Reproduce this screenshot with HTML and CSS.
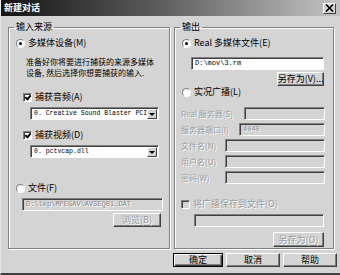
FILE: index.html
```html
<!DOCTYPE html>
<html lang="zh-CN">
<head>
  <meta charset="UTF-8">
  <title>新建对话</title>
  <link rel="stylesheet" href="styles.css">
</head>
<body>
<div class="dialog">
  <div class="titlebar">
    <span class="title">新建对话</span>
    <span class="close">
      <svg width="9" height="8" viewBox="0 0 9 8"><path d="M1 0.5 L8 7.5 M8 0.5 L1 7.5" stroke="#000" stroke-width="1.6"/></svg>
    </span>
  </div>

  <div class="main">
    <!-- 输入 -->
    <fieldset class="group group-in">
      <legend>输入来源</legend>
      <div class="opt opt-top"><span class="radio on"></span>多媒体设备(M)</div>
      <p class="hint">准备好你将要进行捕获的来源多媒体<br>设备, 然后选择你想要捕获的输入.</p>
      <div class="opt opt-audio"><span class="check on"></span>捕获音频(A)</div>
      <div class="combo"><span class="combo-text">0. Creative Sound Blaster PCI</span><span class="combo-btn"></span></div>
      <div class="opt opt-video"><span class="check on"></span>捕获视频(D)</div>
      <div class="combo"><span class="combo-text">0. pctvcap.dll</span><span class="combo-btn"></span></div>
      <div class="opt opt-file"><span class="radio"></span>文件(F)</div>
      <div class="field field-file off">D:\lkp\MPEGAV\AVSEQ01.DAT</div>
      <div class="btn btn-browse off">浏览(B)</div>
    </fieldset>

    <!-- 输出 -->
    <fieldset class="group group-out">
      <legend>输出</legend>
      <div class="opt opt-top"><span class="radio on"></span>Real 多媒体文件(E)</div>
      <div class="field field-rm">D:\mov\3.rm</div>
      <div class="btn btn-saveas">另存为(V)...</div>
      <div class="opt opt-live"><span class="radio"></span>实况广播(L)</div>
      <div class="rows">
        <div class="row"><span class="lbl">Real 服务器(S)</span><span class="field off w80"></span></div>
        <div class="row"><span class="lbl">服务器端口(I)</span><span class="field off w85">4040</span></div>
        <div class="row"><span class="lbl">文件名(N)</span><span class="field off w99"></span></div>
        <div class="row"><span class="lbl">用户名(U)</span><span class="field off w99"></span></div>
        <div class="row"><span class="lbl">密码(W)</span><span class="field off w99"></span></div>
      </div>
      <div class="opt opt-save off"><span class="check dis"></span>将广播保存到文件(O)</div>
      <div class="field field-save off"></div>
      <div class="btn btn-save off">另存为(O)</div>
    </fieldset>
  </div>

  <div class="footer">
    <div class="btn btn-foot btn-default">确定</div>
    <div class="btn btn-foot btn-wide">取消</div>
    <div class="btn btn-foot btn-wide">帮助</div>
  </div>
</div>
</body>
</html>
```

FILE: styles.css
```css
* {
  margin: 0;
  padding: 0;
  box-sizing: border-box;
}

body {
  font-family: "Noto Sans CJK SC", "Noto Sans", sans-serif;
  font-size: 9px;
  color: #000;
  background: #d4d4d4;
}

.dialog {
  width: 340px;
  height: 275px;
  background: #d4d4d4;
  border-left: 1px solid #e8e8e8;
  border-bottom: 2px solid #404040;
  display: flex;
  flex-direction: column;
  overflow: hidden;
}

/* title bar */
.titlebar {
  height: 16px;
  flex: none;
  display: flex;
  align-items: center;
  justify-content: space-between;
  padding: 0 4px 0 3px;
  background: linear-gradient(to right, #141414, #5a5a5a 45%, #c4c4c4);
}

.title {
  color: #fff;
  font-weight: bold;
  font-size: 9px;
  line-height: 10px;
}

.close {
  width: 13px;
  height: 11px;
  display: flex;
  align-items: center;
  justify-content: center;
  background: #d4d4d4;
  border: 1px solid;
  border-color: #fff #404040 #404040 #fff;
}

/* groups */
.main {
  height: 233px;
  flex: none;
  display: flex;
  gap: 4px;
  padding: 6px 0 0 7px;
}

.group {
  border: 1px solid #808080;
  box-shadow: 1px 1px 0 #fff, inset 1px 1px 0 #fff;
  min-width: 0;
  display: flex;
  flex-direction: column;
  align-items: flex-start;
}

.group-in {
  width: 162px;
}

.group-out {
  width: 160px;
}

legend {
  margin-left: 5px;
  padding: 0 2px;
  line-height: 10px;
}

.opt {
  display: flex;
  align-items: center;
  gap: 3px;
  height: 10px;
  line-height: 10px;
  white-space: nowrap;
}

.opt-top {
  margin: 6px 0 0 7px;
}

.hint {
  margin: 8px 0 0 17px;
  font-size: 8px;
  line-height: 11px;
  white-space: nowrap;
}

.opt-audio {
  margin: 14px 0 0 14px;
}

.opt-video {
  margin: 10px 0 0 14px;
}

.opt-file {
  margin: 25px 0 0 7px;
}

.opt-live {
  margin: 1px 0 0 7px;
}

.opt-save {
  margin: 15px 0 0 6px;
}

/* radio / check */
.radio {
  width: 9px;
  height: 9px;
  border-radius: 50%;
  border: 1px solid;
  border-color: #808080 #fff #fff #808080;
  background: #fff;
  display: flex;
  align-items: center;
  justify-content: center;
}

.radio.on::after {
  content: "";
  width: 3px;
  height: 3px;
  border-radius: 50%;
  background: #000;
}

.check {
  width: 9px;
  height: 9px;
  border: 1px solid;
  border-color: #808080 #fff #fff #808080;
  box-shadow: inset 1px 1px 0 #404040;
  background: #fff;
  position: relative;
}

.check.on::after {
  content: "";
  position: absolute;
  left: 2px;
  top: 0;
  width: 2px;
  height: 4px;
  border: solid #000;
  border-width: 0 2px 2px 0;
  transform: rotate(40deg);
}

.check.dis {
  background: #d4d4d4;
}

/* combo / field */
.combo {
  width: 129px;
  height: 13px;
  margin: 5px 0 0 21px;
  display: flex;
  border: 1px solid;
  border-color: #808080 #fff #fff #808080;
  box-shadow: inset 1px 1px 0 #404040;
  background: #fff;
  padding: 1px 1px 0 1px;
}

.combo-text {
  flex: 1;
  min-width: 0;
  overflow: hidden;
  white-space: nowrap;
  font-family: "Liberation Mono", monospace;
  font-size: 6.5px;
  line-height: 10px;
  padding-left: 2px;
}

.combo-btn {
  width: 10px;
  height: 10px;
  flex: none;
  background: #d4d4d4;
  border: 1px solid;
  border-color: #fff #404040 #404040 #fff;
  display: flex;
  align-items: center;
  justify-content: center;
}

.combo-btn::after {
  content: "";
  border: 3px solid transparent;
  border-top: 3px solid #000;
  border-bottom: 0;
}

.field {
  height: 13px;
  border: 1px solid;
  border-color: #808080 #fff #fff #808080;
  box-shadow: inset 1px 1px 0 #404040;
  background: #fff;
  font-family: "Liberation Mono", monospace;
  font-size: 7px;
  line-height: 11px;
  padding-left: 3px;
  white-space: nowrap;
  overflow: hidden;
}

.field.off {
  background: #d4d4d4;
  color: #8a8a8a;
}

.field-file {
  width: 141px;
  margin: 5px 0 0 13px;
}

.field-rm {
  width: 133px;
  margin: 9px 0 0 16px;
}

.field-save {
  width: 130px;
  margin: 5px 0 0 19px;
}

/* right side rows */
.rows {
  align-self: stretch;
  margin: 10px 8px 0 6px;
  display: flex;
  flex-direction: column;
  gap: 3px;
}

.row {
  height: 13px;
  display: flex;
  align-items: center;
  justify-content: space-between;
}

.lbl {
  font-size: 8px;
  white-space: nowrap;
}

.lbl,
.off {
  color: #9a9a9a;
  text-shadow: 1px 1px 0 #fff;
}

.w80 { width: 81px; }
.w85 { width: 86px; }
.w99 { width: 100px; }

/* buttons */
.btn {
  height: 15px;
  display: flex;
  align-items: center;
  justify-content: center;
  background: #d4d4d4;
  border: 1px solid;
  border-color: #fff #404040 #404040 #fff;
  box-shadow: inset -1px -1px 0 #808080;
  line-height: 10px;
  white-space: nowrap;
}

.btn-browse {
  width: 48px;
  height: 14px;
  margin: 2px 0 0 104px;
}

.btn-saveas {
  width: 47px;
  height: 14px;
  margin: 2px 0 0 102px;
}

.btn-save {
  width: 51px;
  margin: 5px 0 0 98px;
}

.footer {
  flex: 1;
  display: flex;
  justify-content: flex-end;
  align-items: flex-start;
  gap: 3px;
  padding: 4px 3px 0 0;
}

.btn-foot {
  height: 14px;
  width: 54px;
}

.btn-default {
  width: 50px;
  border-color: #000;
  box-shadow: inset 1px 1px 0 #fff, inset -1px -1px 0 #404040, inset -2px -2px 0 #808080;
}
```
